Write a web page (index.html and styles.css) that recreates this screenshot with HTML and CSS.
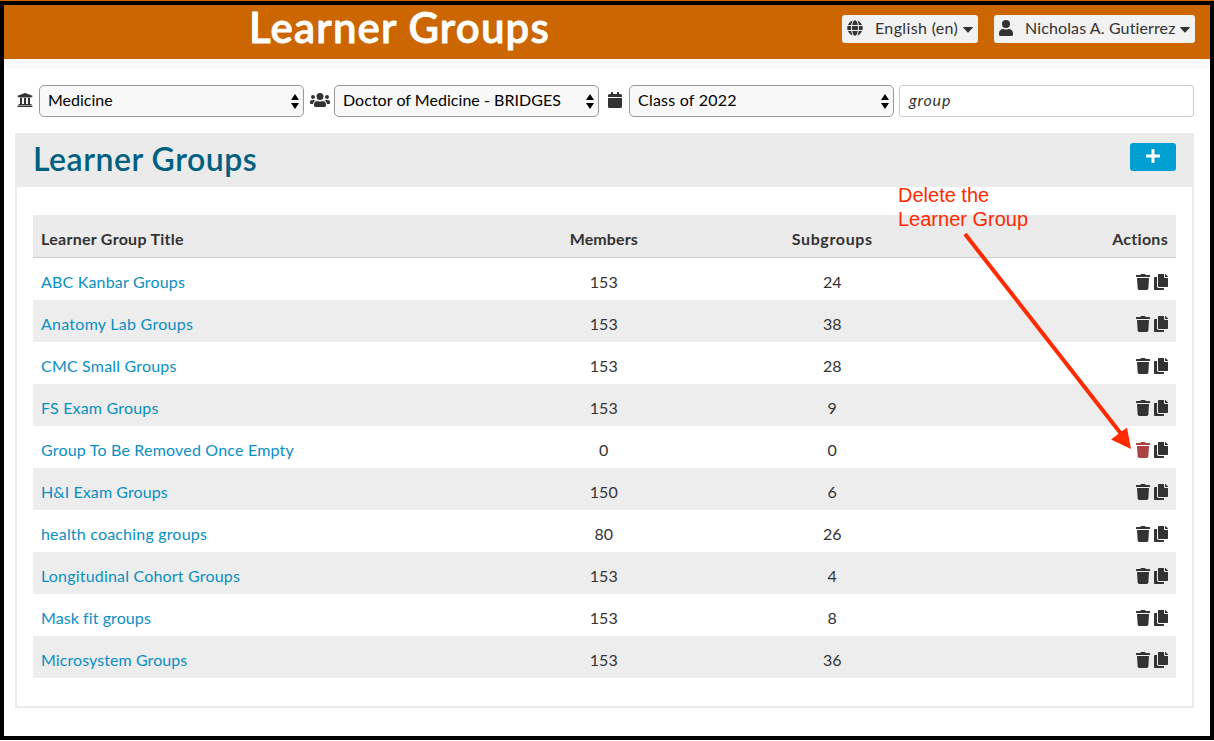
FILE: index.html
```html
<!DOCTYPE html>
<html lang="en">
<head>
<meta charset="utf-8">
<title>Learner Groups</title>
<link rel="stylesheet" href="styles.css">
</head>
<body>
<svg class="defs" width="0" height="0" aria-hidden="true">
  <symbol id="trash" viewBox="0 0 448 512"><path d="M432 32H312l-9-19A24 24 0 0 0 281 0H167a24 24 0 0 0-22 13l-9 19H16A16 16 0 0 0 0 48v32a16 16 0 0 0 16 16h416a16 16 0 0 0 16-16V48a16 16 0 0 0-16-16zM53 467a48 48 0 0 0 48 45h246a48 48 0 0 0 48-45l21-339H32z"/></symbol>
  <symbol id="copy" viewBox="0 0 448 512"><path d="M320 448v40c0 13-11 24-24 24H24c-13 0-24-11-24-24V120c0-13 11-24 24-24h72v296c0 31 25 56 56 56zm0-344V0H152c-13 0-24 11-24 24v368c0 13 11 24 24 24h272c13 0 24-11 24-24V128H344c-13 0-24-11-24-24zm121-31L375 7a24 24 0 0 0-17-7h-6v96h96v-6a24 24 0 0 0-7-17z"/></symbol>
  <symbol id="bank" viewBox="0 0 512 512"><path d="M496 128v16a8 8 0 0 1-8 8h-24v12c0 7-5 12-12 12H60c-7 0-12-5-12-12v-12H24a8 8 0 0 1-8-8v-16a8 8 0 0 1 5-7l232-88a8 8 0 0 1 6 0l232 88a8 8 0 0 1 5 7zm-24 304H40c-13 0-24 11-24 24v16a8 8 0 0 0 8 8h464a8 8 0 0 0 8-8v-16c0-13-11-24-24-24zM96 192v192H60c-7 0-12 5-12 12v20h416v-20c0-7-5-12-12-12h-36V192h-64v192h-64V192h-64v192h-64V192z"/></symbol>
  <symbol id="users" viewBox="0 0 640 512"><path d="M96 224a64 64 0 1 0 0-128 64 64 0 0 0 0 128zm448 0a64 64 0 1 0 0-128 64 64 0 0 0 0 128zm32 32h-64c-18 0-34 7-45 19 40 22 69 62 75 109h66c18 0 32-14 32-32v-32a64 64 0 0 0-64-64zm-256 0a112 112 0 1 0 0-224 112 112 0 0 0 0 224zm77 32h-8a155 155 0 0 1-138 0h-8A115 115 0 0 0 128 403v29a48 48 0 0 0 48 48h288a48 48 0 0 0 48-48v-29a115 115 0 0 0-115-115zm-224-13A64 64 0 0 0 128 256H64a64 64 0 0 0-64 64v32c0 18 14 32 32 32h66c6-47 35-87 75-109z"/></symbol>
  <symbol id="calendar" viewBox="0 0 448 512"><path d="M12 192h424c7 0 12 5 12 12v260a48 48 0 0 1-48 48H48a48 48 0 0 1-48-48V204c0-7 5-12 12-12zm436-44v-36a48 48 0 0 0-48-48h-48V12c0-7-5-12-12-12h-40c-7 0-12 5-12 12v52H160V12c0-7-5-12-12-12h-40c-7 0-12 5-12 12v52H48a48 48 0 0 0-48 48v36c0 7 5 12 12 12h424c7 0 12-5 12-12z"/></symbol>
  <symbol id="globe" viewBox="0 0 496 512"><path d="M336 160C322 71 288 8 248 8s-74 63-88 152zm-184 96c0 22 1 44 3 64h186c4-42 4-86 0-128H155c-2 20-3 42-3 64zm325-96A248 248 0 0 0 316 17c26 35 43 88 52 143zM181 17A248 248 0 0 0 19 160h109c9-55 27-108 53-143zm307 175H372c4 42 4 86 0 128h116c11-42 11-86 0-128zM120 256c0-22 1-43 3-64H8a248 248 0 0 0 0 128h115c-2-21-3-42-3-64zm40 96c14 89 48 152 88 152s74-63 88-152zm156 143a248 248 0 0 0 161-143H368c-9 55-26 108-52 143zM19 352a248 248 0 0 0 162 143c-26-35-44-88-53-143z"/></symbol>
  <symbol id="user" viewBox="0 0 448 512"><path d="M224 256a128 128 0 1 0 0-256 128 128 0 0 0 0 256zm90 32h-17a174 174 0 0 1-146 0h-17A134 134 0 0 0 0 422v42a48 48 0 0 0 48 48h352a48 48 0 0 0 48-48v-42a134 134 0 0 0-134-134z"/></symbol>
  <symbol id="caret" viewBox="0 0 10 6"><path d="M.6 0h8.8q.9.1.3.8L5.6 5.3q-.6.5-1.200 0L.3.8Q-.3.100.6 0z"/></symbol>
  <symbol id="sort" viewBox="0 0 8 15"><path d="M4 0l4 6H0zM0 9h8l-4 6z"/></symbol>
  <symbol id="plus" viewBox="0 0 14 14"><path d="M5.500 0h3v5.500H14v3H8.500V14h-3V8.500H0v-3h5.500z"/></symbol>
</svg>

<div class="frame">
  <header class="topbar">
    <h1 class="page-title">Learner Groups</h1>
    <div class="menus">
      <button class="menu menu-lang"><svg class="menu-icon"><use href="#globe"/></svg><span class="menu-label">English (en)</span><svg class="caret"><use href="#caret"/></svg></button>
      <button class="menu menu-user"><svg class="menu-icon"><use href="#user"/></svg><span class="menu-label">Nicholas A. Gutierrez</span><svg class="caret"><use href="#caret"/></svg></button>
    </div>
  </header>
  <div class="subbar"></div>

  <div class="filters">
    <svg class="f-icon f-bank"><use href="#bank"/></svg>
    <div class="select"><span class="s-med">Medicine</span><svg class="sort"><use href="#sort"/></svg></div>
    <svg class="f-icon f-users"><use href="#users"/></svg>
    <div class="select"><span class="s-prog">Doctor of Medicine - BRIDGES</span><svg class="sort"><use href="#sort"/></svg></div>
    <svg class="f-icon f-cal"><use href="#calendar"/></svg>
    <div class="select"><span class="s-year">Class of 2022</span><svg class="sort"><use href="#sort"/></svg></div>
    <div class="search">group</div>
  </div>

  <section class="panel">
    <div class="panel-head">
      <h2 class="panel-title">Learner Groups</h2>
      <button class="add" aria-label="Add"><svg class="plus"><use href="#plus"/></svg></button>
    </div>
    <div class="table">
      <div class="row head"><span>Learner Group Title</span><span class="num h-mem">Members</span><span class="num h-sub">Subgroups</span><span class="acts">Actions</span></div>
      <div class="row"><a>ABC Kanbar Groups</a><span class="num">153</span><span class="num">24</span><span class="acts"><svg><use href="#trash"/></svg><svg><use href="#copy"/></svg></span></div>
      <div class="row"><a class="wide">Anatomy Lab Groups</a><span class="num">153</span><span class="num">38</span><span class="acts"><svg><use href="#trash"/></svg><svg><use href="#copy"/></svg></span></div>
      <div class="row"><a>CMC Small Groups</a><span class="num">153</span><span class="num">28</span><span class="acts"><svg><use href="#trash"/></svg><svg><use href="#copy"/></svg></span></div>
      <div class="row"><a>FS Exam Groups</a><span class="num">153</span><span class="num">9</span><span class="acts"><svg><use href="#trash"/></svg><svg><use href="#copy"/></svg></span></div>
      <div class="row"><a>Group To Be Removed Once Empty</a><span class="num">0</span><span class="num">0</span><span class="acts"><svg class="enabled"><use href="#trash"/></svg><svg><use href="#copy"/></svg></span></div>
      <div class="row"><a class="tight">H&amp;I Exam Groups</a><span class="num">150</span><span class="num">6</span><span class="acts"><svg><use href="#trash"/></svg><svg><use href="#copy"/></svg></span></div>
      <div class="row"><a>health coaching groups</a><span class="num">80</span><span class="num">26</span><span class="acts"><svg><use href="#trash"/></svg><svg><use href="#copy"/></svg></span></div>
      <div class="row"><a>Longitudinal Cohort Groups</a><span class="num">153</span><span class="num">4</span><span class="acts"><svg><use href="#trash"/></svg><svg><use href="#copy"/></svg></span></div>
      <div class="row"><a class="tight">Mask fit groups</a><span class="num">153</span><span class="num">8</span><span class="acts"><svg><use href="#trash"/></svg><svg><use href="#copy"/></svg></span></div>
      <div class="row"><a class="tight">Microsystem Groups</a><span class="num">153</span><span class="num">36</span><span class="acts"><svg><use href="#trash"/></svg><svg><use href="#copy"/></svg></span></div>
    </div>
  </section>
</div>

<div class="note">Delete the<br>Learner Group</div>
<svg class="arrow" viewBox="0 0 180 230"><path class="shaft" d="M5 4L162 205"/><path class="tip" d="M171 219L167 197.500L151 209.500z"/></svg>
</body>
</html>
```
FILE: styles.css
```css
* { box-sizing: border-box; }
body {
  margin: 0;
  height: 741px;
  padding-bottom: 1px;
  overflow: hidden;
  border-top: 1px solid #c60;
  background: #fff;
  color: #333;
  font: 16px/24px Lato, "Noto Sans", sans-serif;
  position: relative;
}
.defs { position: absolute; }
svg { display: block; fill: currentColor; flex: none; }
.frame { height: 739px; border: 4px solid #000; }

.topbar {
  height: 54px;
  background: #c60;
  display: flex;
  justify-content: space-between;
  padding: 0 15px 0 245px;
}
.page-title {
  margin: 0;
  color: #fff;
  font-size: 42px;
  line-height: 44px;
  font-weight: 600;
  letter-spacing: 1.15px;
  -webkit-text-stroke: .8px #fff;
  white-space: nowrap;
}
.menus { display: flex; gap: 16px; padding-top: 10px; }
.menu {
  height: 28px;
  display: flex;
  align-items: center;
  border: 0;
  border-radius: 3px;
  background: #f2f2f2;
  color: #333;
  padding: 0 5px;
  font: inherit;
  white-space: nowrap;
}
.menu-lang { width: 136px; letter-spacing: .35px; }
.menu-user { width: 201px; letter-spacing: .12px; }
.menu-icon { width: 16px; height: 16px; margin-right: 12px; margin-top: -2px; }
.menu-user .menu-icon { width: 14px; margin-right: 12px; }
.menu-label { flex: 1; text-align: left; margin-top: -2px; }
.caret { width: 10px; height: 6px; margin-top: 2px; }

.subbar { height: 10px; background: #fafafa; }

.filters { display: flex; padding: 16px 0 0 13px; height: 64px; }
.f-icon { color: #333; margin-top: 7px; height: 16px; }
.f-bank { width: 16px; margin-right: 6px; }
.f-users { width: 20px; margin: 7px 4px 0 6px; }
.f-cal { width: 14px; margin: 7px 7px 0 9px; }
.select {
  width: 265px;
  height: 32px;
  border: 1px solid #999;
  border-radius: 5px;
  background: #f8f8f8;
  color: #000;
  padding: 0 4px 0 8px;
  display: flex;
  justify-content: space-between;
  align-items: center;
  white-space: nowrap;
}
.select span { margin-top: -2px; }
.s-prog { letter-spacing: .04px; }
.s-year { letter-spacing: .22px; }
.sort { width: 8px; height: 15px; }
.search {
  width: 295px;
  height: 32px;
  margin-left: 5px;
  border: 1px solid #ccc;
  border-radius: 3px;
  padding: 2px 9px;
  font-style: italic;
  letter-spacing: .8px;
}

.panel {
  width: 1179px;
  height: 575px;
  margin-left: 11px;
  border: 2px solid #ebebeb;
  border-top: 0;
}
.panel-head {
  height: 54px;
  background: #ebebeb;
  display: flex;
  justify-content: space-between;
  padding: 10px 16px 0 16px;
}
.panel-title {
  margin: 0;
  color: #006080;
  font-size: 32px;
  line-height: 32px;
  font-weight: 600;
  letter-spacing: .52px;
}
.add {
  width: 46px;
  height: 28px;
  border: 0;
  border-radius: 3px;
  background: #009fd1;
  color: #fff;
  padding: 0;
  display: flex;
  justify-content: center;
}
.plus { width: 14px; height: 14px; margin-top: 6px; }

.table { margin: 28px 16px 0; }
.row {
  height: 42px;
  padding: 6px 8px 0;
  display: grid;
  grid-template-columns: 448.500px 228.500px 228.500px 221.500px;
  align-items: center;
}
.row:nth-child(odd) { background: #ededed; }
.row.head {
  height: 43px;
  padding-top: 6px;
  background: #ebebeb;
  border-bottom: 1px solid #ccc;
  font-weight: 700;
  letter-spacing: .28px;
}
.row .h-mem { letter-spacing: .1px; }
.row .h-sub { letter-spacing: .65px; }
.row a { color: #0a8fc4; letter-spacing: .19px; }
.row a.wide { letter-spacing: .26px; }
.row a.tight { letter-spacing: .08px; }
.num { text-align: center; }
.acts { display: flex; justify-content: flex-end; gap: 4px; }
.acts svg { width: 14px; height: 16px; }
.enabled { color: #a94442; }

.note {
  position: absolute;
  left: 898px;
  top: 182px;
  color: #ff2a00;
  font: 20px/24px "Liberation Sans", Arial, sans-serif;
}
.arrow {
  position: absolute;
  left: 960px;
  top: 229px;
  width: 180px;
  height: 230px;
}
.shaft { stroke: #ff2a00; stroke-width: 4; fill: none; }
.tip { fill: #ff2a00; }
```
